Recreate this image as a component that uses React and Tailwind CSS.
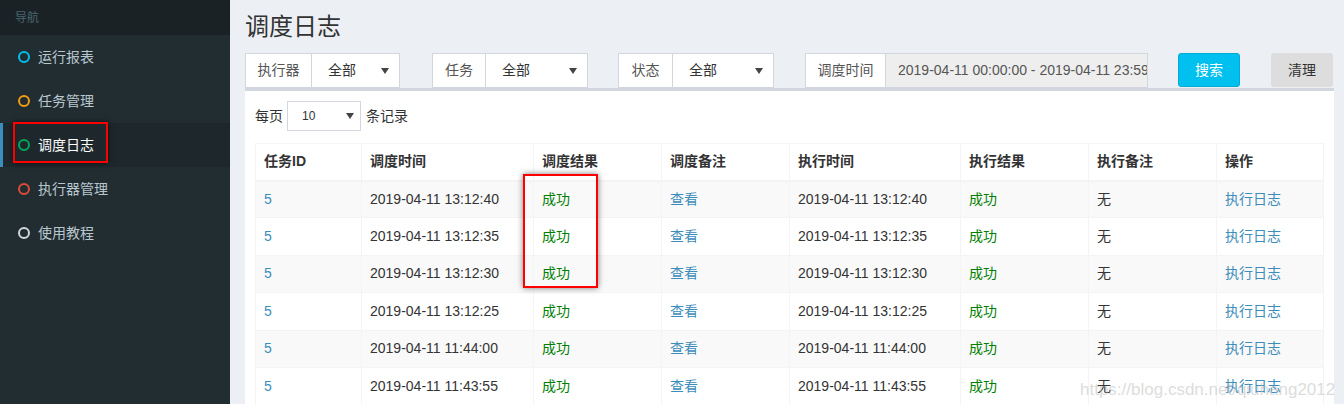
import React from "react";

const FONT = { fontFamily: '"Liberation Sans", "Noto Sans CJK SC", sans-serif' };

const navItems = [
    { label: "运行报表", color: "#00c0ef" },
    { label: "任务管理", color: "#f39c12" },
    { label: "调度日志", color: "#00a65a", active: true },
    { label: "执行器管理", color: "#dd4b39" },
    { label: "使用教程", color: "#d2d6de" },
];

const rows = [
    "2019-04-11 13:12:40",
    "2019-04-11 13:12:35",
    "2019-04-11 13:12:30",
    "2019-04-11 13:12:25",
    "2019-04-11 11:44:00",
    "2019-04-11 11:43:55",
];

const cols = [
    { title: "任务ID", w: "w-[106px]" },
    { title: "调度时间", w: "w-[172px]" },
    { title: "调度结果", w: "w-[128px]" },
    { title: "调度备注", w: "w-[128px]" },
    { title: "执行时间", w: "w-[171px]" },
    { title: "执行结果", w: "w-[128px]" },
    { title: "执行备注", w: "w-[128px]" },
    { title: "操作", w: "w-[107px]" },
];

function Caret() {
    return (
        <svg width="8" height="6" viewBox="0 0 8 6" className="shrink-0">
            <path d="M0 0 L8 0 L4 6 Z" fill="#444" />
        </svg>
    );
}

function SelectGroup({ label, labelW, selectW }) {
    return (
        <div className="flex h-[35px]">
            <div className={`${labelW} flex items-center justify-center bg-white border border-[#d2d6de] text-[14px] text-[#555]`}>
                {label}
            </div>
            <div className={`${selectW} flex items-center justify-between bg-white border border-l-0 border-[#d2d6de] pl-[16px] pr-[10px] text-[14px] text-[#333]`}>
                <span>全部</span>
                <Caret />
            </div>
        </div>
    );
}

function Sidebar() {
    return (
        <aside className="w-[230px] shrink-0 bg-[#222d32] relative">
            <div className="h-[35px] bg-[#1a2226] flex items-center pl-[15px] text-[12px] text-[#4b646f]">导航</div>
            {navItems.map((item) => (
                <div
                    key={item.label}
                    className={`h-[44px] flex items-center text-[14px] ${
                        item.active
                            ? "bg-[#1e282c] border-l-[3px] border-[#3c8dbc] pl-[15px] text-white"
                            : "pl-[18px] text-[#b8c7ce]"
                    }`}
                >
                    <span
                        className="w-[12px] h-[12px] rounded-full border-2 bg-transparent"
                        style={{ borderColor: item.color }}
                    />
                    <span className="ml-[8px]">{item.label}</span>
                </div>
            ))}
            <div className="absolute left-[13px] top-[122px] w-[95px] h-[41px] border-2 border-[#ff0000] shadow-[0_0_6px_rgba(0,0,0,0.6)]" />
        </aside>
    );
}

export default function App() {
    return (
        <div className="flex w-[1344px] h-[404px] overflow-hidden bg-[#ecf0f5] relative" style={FONT}>
            <Sidebar />

            <main className="flex-1 pl-[15px] pr-[11px]">
                <h1 className="pt-[12px] h-[53px] text-[24px] leading-[30px] text-[#333]">调度日志</h1>

                {/* filters */}
                <div className="flex items-start h-[35px]">
                    <SelectGroup label="执行器" labelW="w-[67px]" selectW="w-[88px]" />
                    <div className="ml-[32px]">
                        <SelectGroup label="任务" labelW="w-[54px]" selectW="w-[102px]" />
                    </div>
                    <div className="ml-[30px]">
                        <SelectGroup label="状态" labelW="w-[55px]" selectW="w-[101px]" />
                    </div>
                    <div className="ml-[31px] flex h-[35px]">
                        <div className="w-[81px] flex items-center justify-center bg-white border border-[#d2d6de] text-[14px] text-[#555]">调度时间</div>
                        <div className="w-[262px] flex items-center bg-[#eeeeee] border border-l-0 border-[#d2d6de] pl-[12px] text-[14px] text-[#555] overflow-hidden whitespace-nowrap">
                            2019-04-11 00:00:00 - 2019-04-11 23:59:59
                        </div>
                    </div>
                    <button className="ml-[30px] w-[62px] h-[34px] rounded-[3px] bg-[#00c0ef] border border-[#00acd6] text-white text-[14px]">搜索</button>
                    <button className="ml-[31px] w-[62px] h-[34px] rounded-[3px] bg-[#dddddd] text-[#333] text-[14px]">清理</button>
                </div>

                {/* box */}
                <div className="bg-white border-t-[3px] border-[#d2d6de] h-[400px] px-[10px] pt-[10px]">
                    <div className="flex items-center h-[30px] text-[14px] text-[#333]">
                        <span>每页</span>
                        <div className="ml-[4px] w-[74px] h-[30px] border border-[#d2d6de] flex items-center justify-between pl-[14px] pr-[6px] text-[12px]">
                            <span>10</span>
                            <Caret />
                        </div>
                        <span className="ml-[5px]">条记录</span>
                    </div>

                    <table className="mt-[12px] border-collapse text-[14px] text-[#333] table-fixed w-[1068px]">
                        <thead>
                            <tr className="h-[37px]">
                                {cols.map((c) => (
                                    <th key={c.title} className={`${c.w} border border-[#f4f4f4] border-b-2 px-[8px] text-left font-bold`}>
                                        {c.title}
                                    </th>
                                ))}
                            </tr>
                        </thead>
                        <tbody>
                            {rows.map((t, i) => (
                                <tr key={i} className={`h-[37.4px] ${i % 2 === 0 ? "bg-[#f9f9f9]" : "bg-white"}`}>
                                    <td className="border border-[#f4f4f4] px-[8px] text-[#3c8dbc]">5</td>
                                    <td className="border border-[#f4f4f4] px-[8px]">{t}</td>
                                    <td className="border border-[#f4f4f4] px-[8px] text-[#008000]">成功</td>
                                    <td className="border border-[#f4f4f4] px-[8px] text-[#3c8dbc]">查看</td>
                                    <td className="border border-[#f4f4f4] px-[8px]">{t}</td>
                                    <td className="border border-[#f4f4f4] px-[8px] text-[#008000]">成功</td>
                                    <td className="border border-[#f4f4f4] px-[8px]">无</td>
                                    <td className="border border-[#f4f4f4] px-[8px] text-[#3c8dbc]">执行日志</td>
                                </tr>
                            ))}
                        </tbody>
                    </table>
                </div>
            </main>

            {/* annotation on table */}
            <div className="absolute left-[523px] top-[174px] w-[75px] h-[114px] border-2 border-[#ff0000] shadow-[0_0_6px_rgba(0,0,0,0.5)]" />

            {/* watermark */}
            <div className="absolute left-[1080px] top-[377px] text-[17px] text-[rgba(190,190,190,0.55)] whitespace-nowrap">
                https://blog.csdn.net/qiuhang2012
            </div>
        </div>
    );
}
